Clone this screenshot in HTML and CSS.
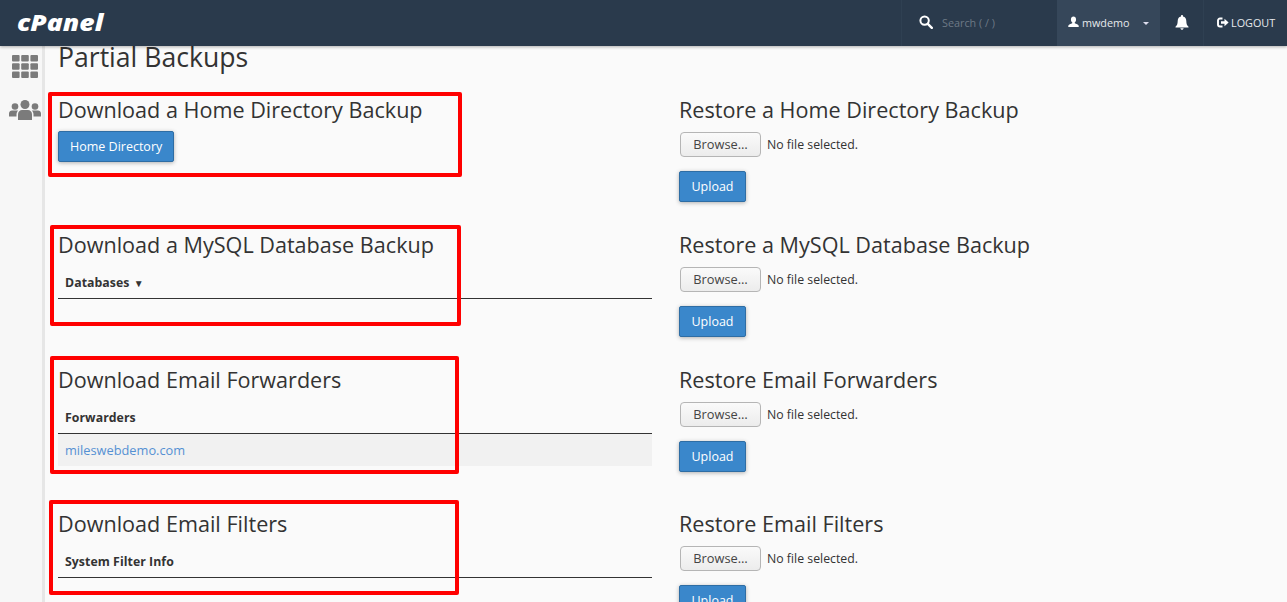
FILE: index.html
```html
<!DOCTYPE html>
<html lang="en">
<head>
<meta charset="utf-8">
<title>Partial Backups</title>
<link rel="stylesheet" href="styles.css">
</head>
<body>
<header class="topbar">
  <div class="logo"><span class="logo-text">cPanel</span></div>
  <div class="top-right">
    <div class="search">
      <svg class="search-icon" viewBox="0 0 14 14"><circle cx="5.6" cy="5.6" r="4.2" fill="none" stroke="#fff" stroke-width="2"/><path d="M8.8 8.8L12.8 12.8" stroke="#fff" stroke-width="2.4" stroke-linecap="round"/></svg>
      <span class="search-text">Search ( / )</span>
    </div>
    <div class="user">
      <svg class="user-icon" viewBox="0 0 12 12"><path d="M6 0C4.300 0 3.200 1.300 3.200 3.200C3.200 4.600 3.800 5.800 4.600 6.400V7.400C3 8 .6 8.800 .3 10.200V11.500H11.700V10.200C11.400 8.800 9 8 7.400 7.400V6.400C8.200 5.800 8.800 4.600 8.800 3.200C8.800 1.300 7.700 0 6 0Z" fill="#fff"/></svg>
      <span class="user-name">mwdemo</span>
      <span class="caret"></span>
    </div>
    <div class="bell">
      <svg class="bell-icon" viewBox="0 0 14 15"><path d="M7 0C6.400 0 6 .4 6 1V1.500C3.800 2 2.700 3.700 2.700 6C2.700 9.200 1.800 10.600 .5 11.800V12.600H13.500V11.800C12.200 10.600 11.300 9.200 11.300 6C11.300 3.700 10.200 2 8 1.500V1C8 .4 7.600 0 7 0ZM5.300 13.300C5.500 14.200 6.200 14.800 7 14.800C7.800 14.800 8.500 14.200 8.700 13.300Z" fill="#fff"/></svg>
    </div>
    <div class="logout">
      <svg class="logout-icon" viewBox="0 0 12 11"><path d="M5.500 1.500H3A2 2 0 0 0 1 3.500V7.500A2 2 0 0 0 3 9.500H5.500" fill="none" stroke="#fff" stroke-width="1.900"/><path d="M4 4.200H7.500V1.800L11.600 5.500L7.500 9.200V6.800H4Z" fill="#fff"/></svg>
      <span>LOGOUT</span>
    </div>
  </div>
</header>

<div class="shell">
  <aside class="sidebar">
    <svg class="grid-icon" viewBox="0 0 26 23">
      <rect x="0" y="0" width="7.600" height="6.600" rx="1"/><rect x="9.200" y="0" width="7.600" height="6.600" rx="1"/><rect x="18.400" y="0" width="7.600" height="6.600" rx="1"/>
      <rect x="0" y="8.200" width="7.600" height="6.600" rx="1"/><rect x="9.200" y="8.200" width="7.600" height="6.600" rx="1"/><rect x="18.400" y="8.200" width="7.600" height="6.600" rx="1"/>
      <rect x="0" y="16.400" width="7.600" height="6.600" rx="1"/><rect x="9.200" y="16.400" width="7.600" height="6.600" rx="1"/><rect x="18.400" y="16.400" width="7.600" height="6.600" rx="1"/>
    </svg>
    <svg class="users-icon" viewBox="0 0 32 20">
      <circle cx="16" cy="4.500" r="4.500"/><circle cx="6" cy="6.500" r="3.300"/><circle cx="26" cy="6.500" r="3.300"/>
      <path d="M9 20V14.500C9 11.500 11 10 13 10H19C21 10 23 11.500 23 14.500V20Z"/>
      <path d="M0 16.500V13.500C0 11.500 1.500 10.500 3 10.500H8C8.500 10.500 9 10.700 9 10.700C8 11.800 7.500 13 7.500 14.500V16.500Z"/>
      <path d="M32 16.500V13.500C32 11.500 30.500 10.500 29 10.500H24C23.500 10.500 23 10.700 23 10.700C24 11.800 24.500 13 24.500 14.500V16.500Z"/>
    </svg>
  </aside>

  <main class="content">
    <h1 class="page-title">Partial Backups</h1>

    <section class="row row-first">
      <div class="col">
        <h2>Download a Home Directory Backup</h2>
        <button class="btn btn-home">Home Directory</button>
      </div>
      <div class="col">
        <h2>Restore a Home Directory Backup</h2>
        <div class="file"><span class="browse">Browse…</span><span class="nofile">No file selected.</span></div>
        <button class="btn btn-upload">Upload</button>
      </div>
    </section>

    <section class="row">
      <div class="col">
        <h2>Download a MySQL Database Backup</h2>
        <div class="table-head">Databases <span class="sort">▼</span></div>
      </div>
      <div class="col">
        <h2>Restore a MySQL Database Backup</h2>
        <div class="file"><span class="browse">Browse…</span><span class="nofile">No file selected.</span></div>
        <button class="btn btn-upload">Upload</button>
      </div>
    </section>

    <section class="row row-tall">
      <div class="col">
        <h2>Download Email Forwarders</h2>
        <div class="table-head">Forwarders</div>
        <div class="table-row"><a href="#">mileswebdemo.com</a></div>
      </div>
      <div class="col">
        <h2>Restore Email Forwarders</h2>
        <div class="file"><span class="browse">Browse…</span><span class="nofile">No file selected.</span></div>
        <button class="btn btn-upload">Upload</button>
      </div>
    </section>

    <section class="row">
      <div class="col">
        <h2>Download Email Filters</h2>
        <div class="table-head">System Filter Info</div>
      </div>
      <div class="col">
        <h2>Restore Email Filters</h2>
        <div class="file"><span class="browse">Browse…</span><span class="nofile">No file selected.</span></div>
        <button class="btn btn-upload">Upload</button>
      </div>
    </section>
  </main>
</div>

<div class="mark mark-1"></div>
<div class="mark mark-2"></div>
<div class="mark mark-3"></div>
<div class="mark mark-4"></div>
</body>
</html>
```

FILE: styles.css
```css
* { box-sizing: border-box; }
html, body { margin: 0; height: 602px; overflow: hidden; }
body { background: #fafafa; color: #333; font-family: "Open Sans", sans-serif; font-size: 12px; position: relative; }

.topbar { height: 46px; background: #2a3a4c; display: flex; justify-content: space-between; align-items: stretch; box-shadow: 0 1px 3px rgba(0,0,0,.3); position: relative; z-index: 2; }
.logo { color: #fff; font-weight: 800; font-style: italic; font-size: 23px; line-height: 44px; padding-left: 17px; }
.logo-text { display: inline-block; transform: scaleX(1.15); transform-origin: left center; }
.top-right { display: flex; align-items: stretch; }
.search { width: 156px; display: flex; align-items: center; padding: 0 0 2px 17px; border-left: 1px solid #2f4052; }
.search-icon { width: 14px; height: 14px; }
.search-text { margin-left: 9px; color: #6d7986; font-size: 10.8px; }
.user { width: 103px; background: #36475a; display: flex; align-items: center; padding: 0 0 2px 11px; color: #e6e9ec; font-size: 10.8px; }
.user-icon { width: 11px; height: 12px; }
.user-name { margin-left: 3px; }
.caret { margin-left: 13px; margin-top: 2px; border: 3px solid transparent; border-top-color: #dde; border-bottom: 0; }
.bell { width: 44px; display: flex; align-items: center; justify-content: center; padding-bottom: 2px; border-right: 1px solid #2f4052; }
.bell-icon { width: 14px; height: 15px; }
.logout { width: 83px; display: flex; align-items: center; padding: 0 0 2px 13px; color: #e6e9ec; font-size: 10.8px; gap: 2px; }
.logout-icon { width: 12px; height: 11px; }

.shell { display: flex; align-items: stretch; height: 556px; }
.sidebar { width: 45px; background: #f7f7f7; border-right: 3px solid #e6e6e6; display: flex; flex-direction: column; align-items: flex-start; flex: none; }
.grid-icon { width: 26px; height: 23px; fill: #7b7b7b; margin: 9px 0 0 12px; }
.users-icon { width: 32px; height: 20px; fill: #7b7b7b; margin: 22px 0 0 9px; }

.content { flex: 1; padding-left: 13px; min-width: 0; }
.page-title { margin: 0; font-size: 26.6px; font-weight: 400; line-height: 22px; height: 49px; }
.row { display: grid; grid-template-columns: 594px 1fr; column-gap: 27px; height: 135px; }
.row-tall { height: 144px; }
.col { min-width: 0; }
h2 { margin: 0; font-size: 21.6px; font-weight: 400; line-height: 30px; }

.btn { display: block; border: 1px solid #2e6da4; border-radius: 2px; background: #3a87cb; color: #fff; font-family: inherit; font-size: 12.5px; height: 31px; padding: 0 11px; box-shadow: 0 1px 4px rgba(0,0,0,.3); }
.btn-home { margin-top: 6px; padding-bottom: 1px; }
.btn-upload { margin-top: 14px; padding: 0 11px 1px; width: 67px; }
.file { display: flex; align-items: center; margin-top: 7px; height: 25px; }
.browse { width: 81px; height: 25px; margin-left: 1px; border: 1px solid #b5b5b5; border-radius: 4px; background: linear-gradient(#fafafa, #ececec); text-align: center; line-height: 23px; font-size: 12.8px; color: #444; }
.nofile { margin-left: 6px; font-size: 12.3px; }

.table-head { margin-top: 7px; height: 32px; padding: 7px 7px 0; font-weight: 700; font-size: 12.3px; border-bottom: 1px solid #333; line-height: 17px; letter-spacing: .05px; }
.sort { font-size: 10px; margin-left: 1px; }
.table-row { height: 32px; background: #f1f1f1; padding: 0 7px; line-height: 33px; font-size: 12.8px; }
.table-row a { color: #5590d3; text-decoration: none; }

.mark { position: absolute; border: 4px solid #f00; border-radius: 2px; z-index: 3; }
.mark-1 { left: 48px; top: 92px; width: 414px; height: 85px; }
.mark-2 { left: 50px; top: 225px; width: 411px; height: 101px; }
.mark-3 { left: 50px; top: 356px; width: 409px; height: 118px; }
.mark-4 { left: 49px; top: 500px; width: 410px; height: 95px; }
```
